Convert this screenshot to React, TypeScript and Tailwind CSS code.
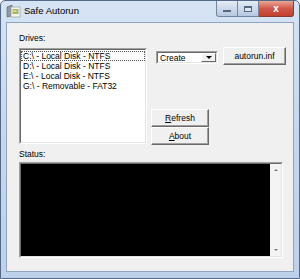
import type { ReactNode } from 'react'

const drives = [
  'C:\\ - Local Disk - NTFS',
  'D:\\ - Local Disk - NTFS',
  'E:\\ - Local Disk - NTFS',
  'G:\\ - Removable - FAT32',
]

function AppIcon() {
  return (
    <svg width="15" height="14" viewBox="0 0 15 14">
      <path d="M1 3 L6 1 L6 12 L1 13 Z" fill="#8f9aa6" stroke="#59636e" strokeWidth="0.6" />
      <rect x="5" y="3" width="9" height="10" fill="#f4f4ef" stroke="#8a8f94" strokeWidth="0.6" />
      <rect x="6.5" y="5" width="6" height="5" fill="#a8b46a" />
      <rect x="7.5" y="6" width="3" height="2" fill="#e0d38a" />
    </svg>
  )
}

function WinButton({ children, className }: { children: ReactNode; className?: string }) {
  return (
    <div
      className={
        'flex items-center justify-center bg-[#f0f0f0] border border-t-white border-l-white border-r-[#696969] border-b-[#696969] shadow-[inset_-1px_-1px_0_#a0a0a0] text-[8.5px] text-black ' +
        (className ?? '')
      }
    >
      {children}
    </div>
  )
}

function Sunken({ children, className }: { children: ReactNode; className?: string }) {
  return (
    <div
      className={
        'border border-t-[#a0a0a0] border-l-[#a0a0a0] border-r-white border-b-white ' + (className ?? '')
      }
    >
      <div className="h-full w-full border border-t-[#696969] border-l-[#696969] border-r-[#e3e3e3] border-b-[#e3e3e3]">
        {children}
      </div>
    </div>
  )
}

export default function App() {
  return (
    <div className="w-[300px] h-[279px] bg-white" style={{ fontFamily: '"Liberation Sans", Arial, sans-serif' }}>
      <div className="w-[300px] h-[279px] flex flex-col rounded-t-[5px] border border-[#54698a] bg-gradient-to-b from-[#d6e4f4] via-[#c4d7ed] to-[#bdd2ea]">
        {/* Title bar */}
        <div className="h-[21px] flex items-start">
          <div className="flex items-center h-[20px] pl-[5px]">
            <AppIcon />
            <span className="ml-[3px] text-[9.5px] text-black">Safe Autorun</span>
          </div>
          <div className="ml-auto mr-[5px] flex">
            <div className="w-[22px] h-[16px] rounded-bl-[3px] border border-t-0 border-[#71869f] bg-gradient-to-b from-[#e4ecf6] to-[#b6c8df] flex items-end justify-center pb-[4px]">
              <div className="w-[8px] h-[2px] bg-white border border-[#56677e]" />
            </div>
            <div className="w-[21px] h-[16px] border border-l-0 border-t-0 border-[#71869f] bg-gradient-to-b from-[#e4ecf6] to-[#b6c8df] flex items-center justify-center">
              <div className="w-[8px] h-[6px] border border-[#56677e] border-t-2 bg-[#dfe7f1]" />
            </div>
            <div className="w-[35px] h-[16px] rounded-br-[3px] border border-l-0 border-t-0 border-[#8a3b30] bg-gradient-to-b from-[#e9a596] via-[#d0584a] to-[#c2402c] flex items-center justify-center text-white text-[10px] font-bold leading-none">
              x
            </div>
          </div>
        </div>

        {/* Client area */}
        <div className="mx-[5px] mb-[6px] flex-1 border border-[#8fa4c0] bg-[#f0f0f0] flex flex-col pl-[12px] pt-[9px]">
          <div className="flex">
            <div className="flex flex-col w-[128px]">
              <div className="h-[12px] leading-[12px] text-[8.5px] text-black">Drives:</div>
              <Sunken className="mt-[4px] h-[96px] bg-white">
                <div className="bg-white h-full pt-[1px] flex flex-col">
                  {drives.map((d, i) => (
                    <div
                      key={d}
                      className={
                        'h-[10px] leading-[9px] text-[8.5px] text-black pl-[1px] whitespace-nowrap ' +
                        (i === 0 ? 'border border-dotted border-[#555]' : 'border border-transparent')
                      }
                    >
                      {d}
                    </div>
                  ))}
                </div>
              </Sunken>
            </div>

            <div className="ml-[4px] flex flex-col">
              <div className="flex items-start mt-[15px] ml-[5px]">
                <Sunken className="mt-[4px] w-[62px] h-[13px] bg-white">
                  <div className="flex h-full bg-white">
                    <div className="flex-1 text-[8.5px] leading-[10px] pl-[2px] text-black">Create</div>
                    <div className="w-[15px] h-full bg-[#f0f0f0] border border-t-white border-l-white border-r-[#696969] border-b-[#696969] flex items-center justify-center">
                      <div className="w-0 h-0 border-l-[3px] border-r-[3px] border-t-[3px] border-l-transparent border-r-transparent border-t-black" />
                    </div>
                  </div>
                </Sunken>
                <WinButton className="ml-[5px] w-[63px] h-[18px]">autorun.inf</WinButton>
              </div>
              <div className="mt-[44px] flex flex-col">
                <WinButton className="w-[58px] h-[18px]">
                  <span>
                    <span className="underline">R</span>efresh
                  </span>
                </WinButton>
                <WinButton className="w-[58px] h-[18px]">
                  <span>
                    <span className="underline">A</span>bout
                  </span>
                </WinButton>
              </div>
            </div>
          </div>

          <div className="mt-[3px] h-[12px] leading-[12px] text-[8.5px] text-black">Status:</div>
          <Sunken className="mt-[2px] w-[264px] h-[96px]">
            <div className="flex h-full">
              <div className="flex-1 bg-black" />
              <div className="w-[11px] bg-[#f4f4f4] flex flex-col items-center justify-between py-[5px]">
                <div className="w-0 h-0 border-l-[2px] border-r-[2px] border-b-[2px] border-l-transparent border-r-transparent border-b-[#7a7a7a]" />
                <div className="w-0 h-0 border-l-[2px] border-r-[2px] border-t-[2px] border-l-transparent border-r-transparent border-t-[#7a7a7a]" />
              </div>
            </div>
          </Sunken>
        </div>
      </div>
    </div>
  )
}
